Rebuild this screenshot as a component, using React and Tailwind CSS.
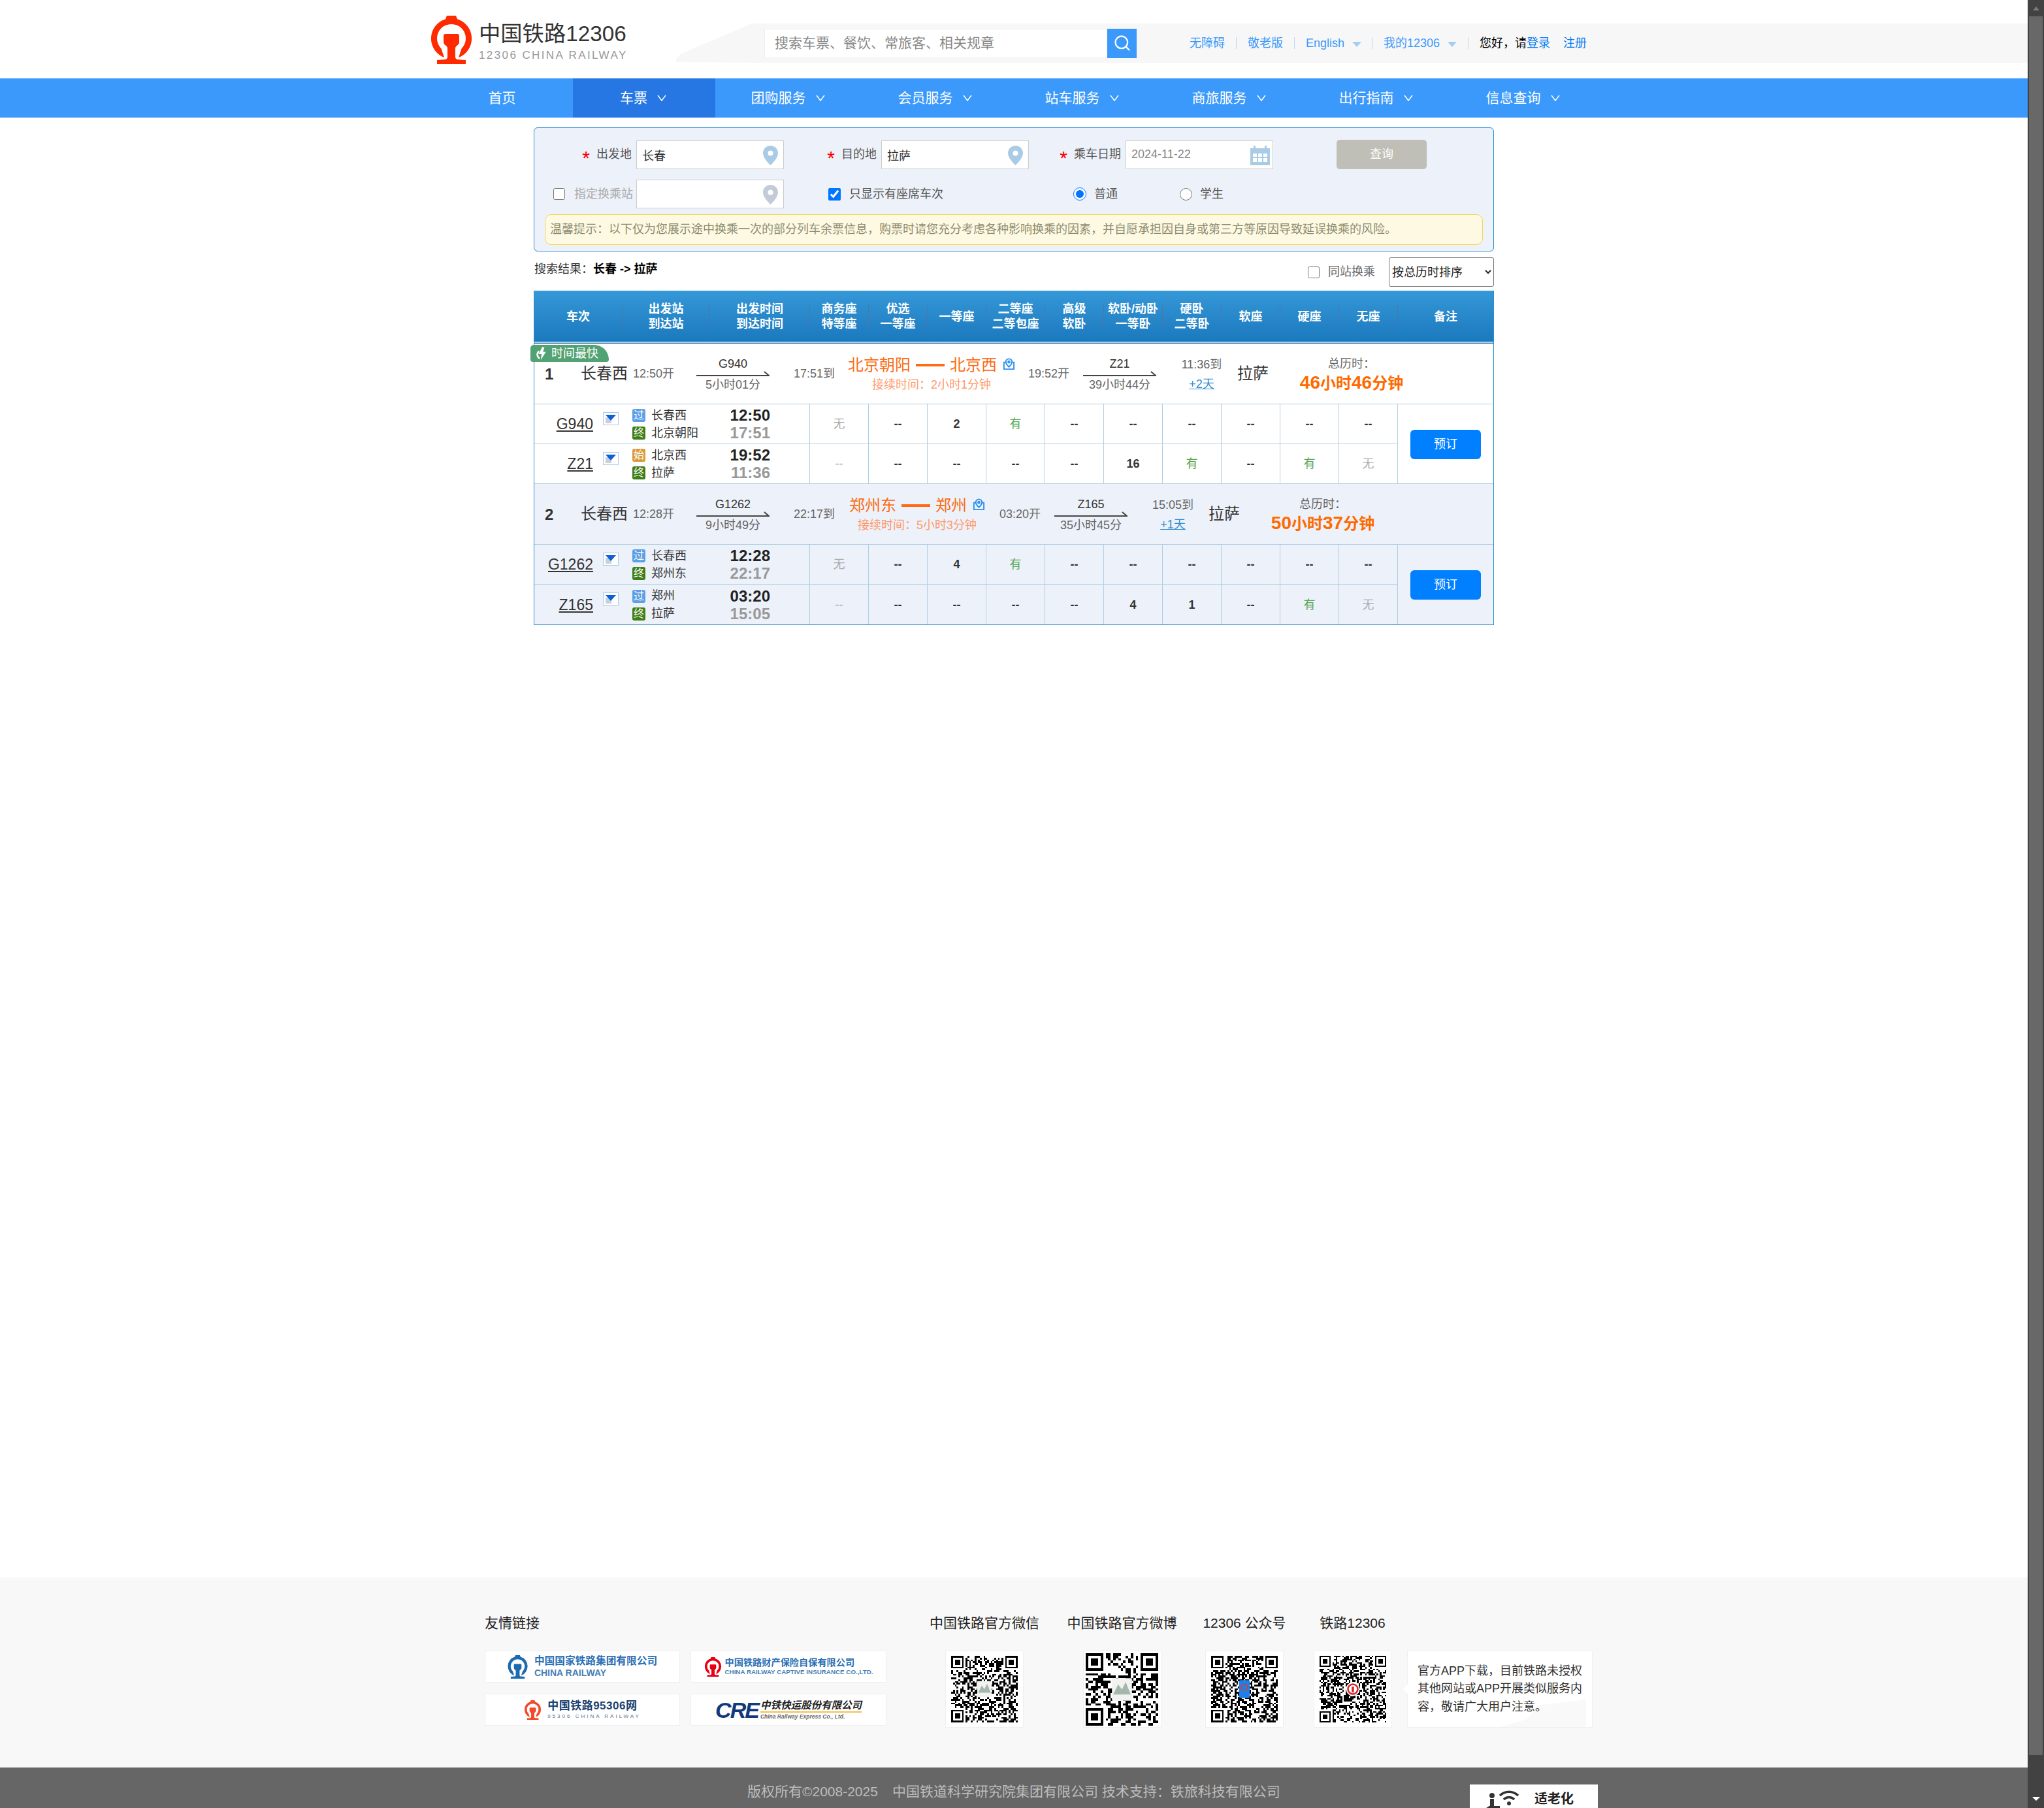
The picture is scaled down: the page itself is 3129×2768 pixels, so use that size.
import { Search } from 'lucide-react'

const NAV = [
  ['首页', 217, false],
  ['车票', 218, true],
  ['团购服务', 225, true],
  ['会员服务', 225, true],
  ['站车服务', 225, true],
  ['商旅服务', 225, true],
  ['出行指南', 225, true],
  ['信息查询', 225, true],
]

const HEADERS = [
  ['车次'], ['出发站', '到达站'], ['出发时间', '到达时间'], ['商务座', '特等座'], ['优选', '一等座'], ['一等座'],
  ['二等座', '二等包座'], ['高级', '软卧'], ['软卧/动卧', '一等卧'], ['硬卧', '二等卧'], ['软座'], ['硬座'], ['无座'], ['备注'],
]

const TAG_COLORS = {
  过: 'bg-[#5d9fe6]',
  终: 'bg-[#3f7d17]',
  始: 'bg-[#d99b3c]',
}

const ROUTES = [
  {
    no: 1,
    shade: false,
    pad: 'px-[20px]',
    from: '长春西', dep: '12:50开',
    first: { train: 'G940', dur: '5小时01分', arr: '17:51到' },
    stationA: '北京朝阳', stationB: '北京西', wait: '接续时间：2小时1分钟',
    second: { dep: '19:52开', train: 'Z21', dur: '39小时44分', arr: '11:36到', plus: '+2天' },
    to: '拉萨', total: ['46', '46'],
    rows: [
      {
        train: 'G940', fromTag: '过', toTag: '终', a: '长春西', b: '北京朝阳', t1: '12:50', t2: '17:51',
        seats: ['无', '--', '2', '有', '--', '--', '--', '--', '--', '--'],
      },
      {
        train: 'Z21', fromTag: '始', toTag: '终', a: '北京西', b: '拉萨', t1: '19:52', t2: '11:36',
        seats: ['-', '--', '--', '--', '--', '16', '有', '--', '有', '无'],
      },
    ],
  },
  {
    no: 2,
    shade: true,
    pad: 'px-[22px]',
    from: '长春西', dep: '12:28开',
    first: { train: 'G1262', dur: '9小时49分', arr: '22:17到' },
    stationA: '郑州东', stationB: '郑州', wait: '接续时间：5小时3分钟',
    second: { dep: '03:20开', train: 'Z165', dur: '35小时45分', arr: '15:05到', plus: '+1天' },
    to: '拉萨', total: ['50', '37'],
    rows: [
      {
        train: 'G1262', fromTag: '过', toTag: '终', a: '长春西', b: '郑州东', t1: '12:28', t2: '22:17',
        seats: ['无', '--', '4', '有', '--', '--', '--', '--', '--', '--'],
      },
      {
        train: 'Z165', fromTag: '过', toTag: '终', a: '郑州', b: '拉萨', t1: '03:20', t2: '15:05',
        seats: ['-', '--', '--', '--', '--', '4', '1', '--', '有', '无'],
      },
    ],
  },
]

function RailLogo({ color, className }) {
  return (
    <svg viewBox="0 0 62 74" className={className}>
      <path
        fill={color}
        fillRule="evenodd"
        d="M24 0h14l2 5.300A31 31 0 0 1 42 64L46.500 50.500A22 22 0 1 0 15.500 50.500L20 64A31 31 0 0 1 22 5.300Z"
      />
      <path
        fill={color}
        d="M22 28h18a3 3 0 0 1 3 3v9q0 4-4 6l-2 3v14q0 3 3 4l13 1v6H9v-6l13-1q3-1 3-4V49l-2-3q-4-2-4-6v-9a3 3 0 0 1 3-3Z"
      />
    </svg>
  )
}

function Pin({ color }) {
  return (
    <svg viewBox="0 0 23 30" className="absolute right-[8px] top-[7px] h-[30px] w-[23px]">
      <path
        fill={color}
        fillRule="evenodd"
        d="M11.500 0C5 0 0 5 0 11.500 0 18 7 26 11.500 30 16 26 23 18 23 11.500 23 5 18 0 11.500 0ZM11.500 7.500a4 4 0 1 1 0 8 4 4 0 0 1 0-8Z"
      />
    </svg>
  )
}

function CalendarIcon() {
  return (
    <svg viewBox="0 0 30 30" className="absolute right-[4px] top-[7px] h-[30px] w-[30px]">
      <path fill="#a9cbe6" d="M0 4h5V0h3v4h14V0h3v4h5v26H0Z" />
      <path
        fill="#fff"
        d="M4 12h6v5H4ZM12 12h6v5h-6ZM20 12h6v5h-6ZM4 19h6v6H4ZM12 19h6v6h-6ZM20 19h6v6h-6Z"
      />
    </svg>
  )
}

function RouteIcon() {
  return (
    <svg viewBox="0 0 20 20" className="ml-[9px] mt-[-4px] h-[20px] w-[19px]" fill="none" stroke="#2a90f0" strokeWidth="2">
      <path d="M6 7.500H2v11h16v-11h-4" />
      <path d="M10 15c-3-3-5-5-5-8a5 5 0 0 1 10 0c0 3-2 5-5 8Z" />
      <circle cx="10" cy="7" r="1.500" />
    </svg>
  )
}

function HalfArrow() {
  return (
    <svg viewBox="0 0 112 8" className="h-[8px] w-[112px]" fill="none" stroke="#444" strokeWidth="2">
      <path d="M0 7h111L104 1" />
    </svg>
  )
}

function Chevron() {
  return (
    <svg viewBox="0 0 14 12" className="ml-[15px] h-[12px] w-[14px]" fill="none" stroke="#fff" strokeWidth="1.500">
      <path d="M1 2l6 8 6-8" />
    </svg>
  )
}

function Caret() {
  return <span className="ml-[12px] mt-[3px] h-0 w-0 border-x-[7px] border-t-[8px] border-x-transparent border-t-[#a8cdf5]" />
}

function FoldIcon() {
  return (
    <svg viewBox="0 0 24 20" className="ml-[15px] mt-[-18px] h-[20px] w-[24px] shrink-0">
      <rect x="0.500" y="0.500" width="23" height="19" fill="#fff" stroke="#a9cbe6" />
      <rect x="4" y="8" width="9" height="9" fill="#c8d0da" />
      <path d="M4 4h16l-8 9Z" fill="#0b5fd8" />
    </svg>
  )
}

function qrPath(seed, n) {
  let s = seed
  let d = ''
  const finder = (x, y) => x >= -1 && y >= -1 && x <= 7 && y <= 7
  for (let y = 0; y < n; y++) {
    for (let x = 0; x < n; x++) {
      s = (s * 1103515245 + 12345) & 0x7fffffff
      if (finder(x, y) || finder(x - n + 7, y) || finder(x, y - n + 7)) continue
      if ((s >> 16) % 100 < 50) d += `M${x} ${y}h1v1h-1Z`
    }
  }
  return d
}

function Finder({ x, y }) {
  return (
    <g>
      <path fillRule="evenodd" d={`M${x} ${y}h7v7h-7ZM${x + 1} ${y + 1}v5h5v-5Z`} />
      <rect x={x + 2} y={y + 2} width="3" height="3" />
    </g>
  )
}

function QrCode({ seed, n = 37, size, center }) {
  return (
    <svg viewBox={`0 0 ${n} ${n}`} style={{ width: size, height: size }} shapeRendering="crispEdges">
      <path d={qrPath(seed, n)} />
      <Finder x={0} y={0} />
      <Finder x={n - 7} y={0} />
      <Finder x={0} y={n - 7} />
      {center === 'photo' && (
        <g shapeRendering="auto">
          <rect x={n / 2 - 4} y={n / 2 - 4.500} width="8" height="9" fill="#f2f3f0" />
          <path d={`M${n / 2 - 3.500} ${n / 2 + 2}l2-4 1.500 2 1.500-3 2 5Z`} fill="#a5b6ac" />
        </g>
      )}
      {center === 'blue' && (
        <g shapeRendering="auto">
          <rect x={n / 2 - 3} y={n / 2 - 5} width="6" height="10" rx="1" fill="#1e80e8" />
          <circle cx={n / 2} cy={n / 2 - 1} r="1.800" fill="none" stroke="#e03a2a" strokeWidth="0.600" />
        </g>
      )}
      {center === 'red' && (
        <g shapeRendering="auto">
          <circle cx={n / 2} cy={n / 2} r="4.200" fill="#fff" />
          <circle cx={n / 2} cy={n / 2} r="3" fill="none" stroke="#d9262a" strokeWidth="1" />
          <rect x={n / 2 - 0.700} y={n / 2 - 1.500} width="1.400" height="3.500" fill="#d9262a" />
        </g>
      )}
    </svg>
  )
}

function Field({ label, labelWidth, children }) {
  return (
    <div className="flex items-center">
      <div className={`flex items-center justify-end pr-[7px] text-[#555] ${labelWidth}`}>
        {label}
      </div>
      {children}
    </div>
  )
}

function Star() {
  return <span className="mr-[10px] mt-[10px] text-[30px] leading-none text-[#f00]">*</span>
}

function TextBox({ value, width = 'w-[226px]', color = 'text-[#333]', children }) {
  return (
    <div className={`relative h-[44px] border border-[#ccc] bg-white ${width}`}>
      <input
        readOnly
        defaultValue={value}
        className={`h-full w-full bg-transparent pl-[8px] text-[18px] outline-none ${color}`}
      />
      {children}
    </div>
  )
}

function QueryForm() {
  return (
    <div className="h-[190px] rounded-[6px] border border-[#2e8ccf] bg-[#edf1f9] pt-[18px] text-[18px]">
      <div className="flex items-center">
        <Field labelWidth="w-[156px]" label={<><Star />出发地</>}>
          <TextBox value="长春"><Pin color="#a9cbe6" /></TextBox>
        </Field>
        <Field labelWidth="w-[149px]" label={<><Star />目的地</>}>
          <TextBox value="拉萨"><Pin color="#a9cbe6" /></TextBox>
        </Field>
        <Field labelWidth="w-[148px]" label={<><Star />乘车日期</>}>
          <TextBox value="2024-11-22" color="text-[#888]"><CalendarIcon /></TextBox>
        </Field>
        <button className="ml-[97px] h-[45px] w-[138px] rounded-[5px] bg-[#bfbfb7] text-[18px] text-white">查询</button>
      </div>
      <div className="mt-[16px] flex items-center">
        <div className="flex w-[156px] items-center pl-[29px] text-[#aaa]">
          <input type="checkbox" className="mr-[14px] h-[18px] w-[18px]" />
          <span>指定换乘站</span>
        </div>
        <TextBox value=""><Pin color="#c3cad8" /></TextBox>
        <label className="ml-[68px] flex w-[375px] items-center text-[#555]">
          <input type="checkbox" defaultChecked className="mr-[13px] h-[19px] w-[19px]" />
          只显示有座席车次
        </label>
        <label className="flex w-[163px] items-center text-[#555]">
          <input type="radio" name="kind" defaultChecked className="mr-[12px] h-[20px] w-[20px]" />
          普通
        </label>
        <label className="flex items-center text-[#555]">
          <input type="radio" name="kind" className="mr-[12px] h-[19px] w-[19px]" />
          学生
        </label>
      </div>
      <div className="mx-[16px] mt-[9px] flex h-[47px] items-center rounded-[10px] border border-[#f3d54e] bg-[#fef9e3] pl-[7px] text-[#8c8c70]">
        温馨提示：以下仅为您展示途中换乘一次的部分列车余票信息，购票时请您充分考虑各种影响换乘的因素，并自愿承担因自身或第三方等原因导致延误换乘的风险。
      </div>
    </div>
  )
}

function ResultBar() {
  return (
    <div className="flex h-[60px] items-center pl-[1px] text-[18px]">
      <span className="mb-[6px] text-[#333]">搜索结果：</span>
      <span className="mb-[6px] font-bold text-black">长春 -&gt; 拉萨</span>
      <label className="ml-auto mt-[3px] flex items-center text-[#666]">
        <input type="checkbox" className="mr-[13px] h-[18px] w-[18px]" />
        同站换乘
      </label>
      <select className="ml-[21px] mt-[3px] h-[45px] w-[161px] rounded-[3px] border border-[#767676] bg-white text-[18px] text-[#222]">
        <option>按总历时排序</option>
      </select>
    </div>
  )
}

function TableHead() {
  return (
    <div className="h-[81px] border-b border-[#1a5f96] bg-gradient-to-b from-[#3598d7] to-[#1a78bd]">
      <div className="grid h-[78px] grid-cols-[135px_134px_153px_repeat(10,90px)_1fr] items-center pt-[2px]">
        {HEADERS.map((lines, i) => (
          <div
            key={i}
            className={`flex h-[38px] flex-col items-center justify-center text-[18px] font-bold leading-[23px] text-white ${
              i < HEADERS.length - 1 ? 'border-r border-[#4a78ae]' : ''
            }`}
          >
            {lines.map(l => <span key={l} className="whitespace-nowrap">{l}</span>)}
          </div>
        ))}
      </div>
      <div className="h-[2px] bg-[#a8cfe8]" />
    </div>
  )
}

function Leg({ train, dur }) {
  return (
    <div className="flex w-[112px] flex-col items-center pt-[2px]">
      <span className="text-[18px] leading-[22px] text-[#333]">{train}</span>
      <HalfArrow />
      <span className="mt-[2px] whitespace-nowrap text-[18px] leading-[22px] text-[#666]">{dur}</span>
    </div>
  )
}

function Summary({ route }) {
  return (
    <div className={`relative flex h-[93px] items-center whitespace-nowrap border-b border-[#b0cfe4] pl-[16px] text-[18px] ${route.shade ? 'bg-[#edf1f9]' : 'bg-white'}`}>
      {route.no === 1 && (
        <div className="absolute left-[-6px] top-[2px] flex h-[26px] w-[120px] items-center rounded-tr-[26px] rounded-tl-[6px] rounded-br-[4px] rounded-bl-[4px] bg-[#52a274] pl-[9px] text-[18px] text-white">
          <svg viewBox="0 0 14 18" className="mr-[7px] h-[20px] w-[16px]" fill="#fff">
            <path d="M8 0 3 10h4l-1 8 7-11H9l2-6Z" />
            <path d="M3 5a7 7 0 0 0 1 12l1-2a5 5 0 0 1-1-8Z" />
          </svg>
          时间最快
        </div>
      )}
      <span className="w-[55px] pt-[1px] text-[24px] font-bold text-[#333]">{route.no}</span>
      <span className="w-[72px] text-[24px] text-[#333]">{route.from}</span>
      <span className="ml-[8px] w-[97px] text-[#666]">{route.dep}</span>
      <Leg train={route.first.train} dur={route.first.dur} />
      <span className="ml-[37px] w-[63px] text-[#666]">{route.first.arr}</span>
      <div className={`flex flex-col items-center ${route.pad}`}>
        <div className="flex items-center text-[24px] leading-[30px] text-[#fc6c15]">
          <span>{route.stationA}</span>
          <span className="mx-[8px] h-[4px] w-[44px] bg-[#fc6c15]" />
          <span>{route.stationB}</span>
          <RouteIcon />
        </div>
        <span className="mt-[4px] leading-[22px] text-[#ff9a6c]">{route.wait}</span>
      </div>
      <span className="w-[63px] text-[#666]">{route.second.dep}</span>
      <div className="ml-[21px]"><Leg train={route.second.train} dur={route.second.dur} /></div>
      <div className="ml-[38px] flex w-[63px] flex-col items-center pt-[2px]">
        <span className="leading-[22px] text-[#666]">{route.second.arr}</span>
        <a className="mt-[8px] leading-[22px] text-[#2e8ccf] underline">{route.second.plus}</a>
      </div>
      <span className="ml-[23px] w-[48px] text-[24px] text-[#333]">{route.to}</span>
      <div className="ml-[48px] flex w-[158px] flex-col items-center pt-[6px]">
        <span className="leading-[22px] text-[#666]">总历时：</span>
        <span className="flex items-baseline text-[24px] font-bold leading-[36px] text-[#ff6a00]">
          <span className="text-[28px]">{route.total[0]}</span>小时<span className="text-[28px]">{route.total[1]}</span>分钟
        </span>
      </div>
    </div>
  )
}

function Seat({ value }) {
  let style = 'font-bold text-[#333]'
  let text = value
  if (value === '无') style = 'text-[#aaa]'
  if (value === '有') style = 'text-[#5aa652]'
  if (value === '-') {
    style = 'text-[#aaa]'
    text = '--'
  }
  return <div className={`flex items-center justify-center border-r border-[#b0cfe4] pt-[1px] ${style}`}>{text}</div>
}

function StationLine({ tag, name, time, muted }) {
  return (
    <div className="flex h-[27px] w-[211px] items-center">
      <span className={`flex h-[20px] w-[20px] items-center justify-center rounded-[3px] text-[16px] leading-none text-white ${TAG_COLORS[tag]}`}>
        {tag}
      </span>
      <span className="ml-[9px] text-[18px] text-[#333]">{name}</span>
      <span className={`ml-auto text-[24px] font-bold ${muted ? 'text-[#999]' : 'text-[#222]'}`}>{time}</span>
    </div>
  )
}

function TrainRow({ row, height }) {
  return (
    <div className={`grid grid-cols-[422px_repeat(10,90px)] text-[18px] ${height}`}>
      <div className="flex items-center border-r border-[#b0cfe4] pt-[1px]">
        <a className="w-[90px] text-right text-[23px] text-[#333] underline">{row.train}</a>
        <FoldIcon />
        <div className="ml-[21px] flex flex-col">
          <StationLine tag={row.fromTag} name={row.a} time={row.t1} />
          <StationLine tag={row.toTag} name={row.b} time={row.t2} muted />
        </div>
      </div>
      {row.seats.map((s, i) => <Seat key={i} value={s} />)}
    </div>
  )
}

function Route({ route }) {
  return (
    <div className={route.shade ? 'bg-[#edf1f9]' : 'bg-white'}>
      <Summary route={route} />
      <div className={`flex ${route.shade ? '' : 'border-b border-[#b0cfe4]'}`}>
        <div>
          <TrainRow row={route.rows[0]} height="h-[61px] border-b border-[#b0cfe4]" />
          <TrainRow row={route.rows[1]} height={route.shade ? 'h-[61px]' : 'h-[60px]'} />
        </div>
        <div className="flex flex-1 items-center justify-center pt-[1px]">
          <button className="h-[45px] w-[108px] rounded-[6px] bg-[#0080ff] text-[18px] text-white">预订</button>
        </div>
      </div>
    </div>
  )
}

function LogoCard({ children }) {
  return <div className="flex h-[49px] items-center justify-center border border-[#efefef] bg-white">{children}</div>
}

function FriendLinks() {
  return (
    <div className="ml-[742px] w-[615px]">
      <div className="h-[30px] text-[21px] leading-[30px] text-[#222]">友情链接</div>
      <div className="mt-[27px] grid grid-cols-[299px_300px] gap-x-[16px] gap-y-[17px]">
        <LogoCard>
          <RailLogo color="#1c6bb0" className="h-[36px] w-[31px]" />
          <div className="ml-[10px] flex flex-col">
            <span className="text-[15.700px] font-bold leading-[20px] text-[#2a6fb4]">中国国家铁路集团有限公司</span>
            <span className="text-[14px] font-bold leading-[17px] text-[#4a7fb5]">CHINA RAILWAY</span>
          </div>
        </LogoCard>
        <LogoCard>
          <RailLogo color="#e60012" className="h-[30px] w-[27px]" />
          <div className="ml-[5px] flex flex-col">
            <span className="text-[14.200px] font-bold leading-[17px] text-[#2a6fb4]">中国铁路财产保险自保有限公司</span>
            <span className="text-[9.800px] font-bold leading-[12px] text-[#4a7fb5]">CHINA RAILWAY CAPTIVE INSURANCE CO.,LTD.</span>
          </div>
        </LogoCard>
        <LogoCard>
          <RailLogo color="#f24a2a" className="h-[30px] w-[27px]" />
          <div className="ml-[9px] flex flex-col">
            <span className="text-[17px] font-bold leading-[21px] tracking-[0.500px] text-[#1b3f6e]">中国铁路95306网</span>
            <span className="text-[8px] leading-[12px] tracking-[3px] text-[#5a7290]">95306 CHINA RAILWAY</span>
          </div>
        </LogoCard>
        <LogoCard>
          <span className="text-[34px] font-bold italic leading-none tracking-[-2px] text-[#123a7a]">CRE</span>
          <div className="ml-[3px] flex flex-col">
            <span className="border-b-2 border-[#f2c14e] text-[15.500px] font-bold italic leading-[19px] text-[#222]">中铁快运股份有限公司</span>
            <span className="text-[8.500px] font-bold italic leading-[12px] text-[#666]">China Railway Express Co., Ltd.</span>
          </div>
        </LogoCard>
      </div>
    </div>
  )
}

function QrColumn({ title, width, marginLeft, children }) {
  return (
    <div className={`flex flex-col items-center ${width} ${marginLeft}`}>
      <div className="h-[30px] whitespace-nowrap text-[21px] leading-[30px] text-[#222]">{title}</div>
      <div className="mt-[27px] flex h-[118px] w-[120px] items-center justify-center border border-[#efefef] bg-white">
        {children}
      </div>
    </div>
  )
}

function Footer() {
  return (
    <div className="mt-auto">
      <div className="flex h-[291px] bg-[#f8f8f8] pt-[55px]">
        <FriendLinks />
        <QrColumn title="中国铁路官方微信" width="w-[168px]" marginLeft="ml-[66px]">
          <QrCode seed={11} size={102} center="photo" />
        </QrColumn>
        <QrColumn title="中国铁路官方微博" width="w-[167px]" marginLeft="ml-[43px]">
          <QrCode seed={23} n={29} size={111} center="photo" />
        </QrColumn>
        <QrColumn title="12306 公众号" width="w-[126px]" marginLeft="ml-[41px]">
          <QrCode seed={37} size={102} center="blue" />
        </QrColumn>
        <QrColumn title="铁路12306" width="w-[119px]" marginLeft="ml-[43px]">
          <QrCode seed={59} n={41} size={102} center="red" />
        </QrColumn>
        <div className="relative ml-[24px] mt-[57px] flex h-[118px] w-[284px] items-center overflow-visible border border-[#efefef] bg-white pl-[15px] text-[18px] leading-[27.500px] text-[#333]">
          <span className="absolute left-[-5px] top-[52px] h-[12px] w-[12px] rotate-45 bg-white" />
          <svg viewBox="0 0 220 70" className="absolute bottom-0 right-0 h-[42px] w-[150px]" fill="#f9f9f9">
            <path d="M0 70 70 50 100 14 220 0V70Z" />
          </svg>
          <p className="relative w-[262px]">官方APP下载，目前铁路未授权其他网站或APP开展类似服务内容，敬请广大用户注意。</p>
        </div>
      </div>
      <div className="flex h-[62px] overflow-hidden bg-[#666] pl-[1144px]">
        <div className="flex h-full w-[815px] items-center whitespace-nowrap pt-[12px] text-[21px] text-[#bdbdbd]">
          <span>版权所有©2008-2025</span>
          <span className="ml-[22px]">中国铁道科学研究院集团有限公司 技术支持：铁旅科技有限公司</span>
        </div>
        <div className="ml-[291px] mt-[26px] flex h-[60px] w-[196px] items-start bg-white pl-[24px] pt-[9px]">
          <svg viewBox="0 0 52 30" className="h-[30px] w-[52px]" fill="none" stroke="#333" strokeWidth="3.500">
            <path d="M22 8a20 20 0 0 1 28 0M28 14a11 11 0 0 1 16 0" />
            <circle cx="36" cy="20" r="3" fill="#333" stroke="none" />
            <circle cx="10" cy="8" r="4" fill="#333" stroke="none" />
            <path d="M10 13v14h12M2 30l6-4" strokeWidth="6" />
          </svg>
          <span className="ml-[23px] text-[20px] font-bold leading-[26px] text-[#222]">适老化</span>
        </div>
      </div>
    </div>
  )
}

function Scrollbar() {
  return (
    <div className="flex h-full w-[25px] shrink-0 flex-col items-center bg-[#424242]">
      <div className="flex h-[25px] items-center justify-center">
        <span className="h-0 w-0 border-x-[5px] border-b-[6px] border-x-transparent border-b-[#7a7a7a]" />
      </div>
      <div className="h-[2662px] w-[21px] bg-[#686868]" />
      <div className="flex flex-1 items-end justify-center pb-[11px]">
        <span className="h-0 w-0 border-x-[6px] border-t-[6px] border-x-transparent border-t-white" />
      </div>
    </div>
  )
}

export default function App() {
  return (
    <div className="flex h-[2768px] w-[3129px] overflow-hidden bg-white font-['Liberation_Sans','Noto_Sans_CJK_SC',sans-serif]">
      <div className="flex min-w-0 flex-1 flex-col">
        <div className="flex h-[120px]">
          <div className="ml-[660px] flex w-[375px] pt-[24px]">
            <RailLogo color="#ff2a00" className="h-[74px] w-[62px]" />
            <div className="ml-[11px] mt-[6px] flex flex-col">
              <span className="text-[33.300px] leading-[44px] text-[#333]">中国铁路12306</span>
              <span className="text-[17px] leading-[22px] tracking-[2.400px] text-[#999]">12306 CHINA RAILWAY</span>
            </div>
          </div>
          <div className="mt-[36px] flex h-[60px] flex-1">
            <svg viewBox="0 0 127 60" preserveAspectRatio="none" className="h-[60px] w-[127px]" fill="#f7f7f7">
              <path d="M127 0H118Q110 1 100 7L8 46Q0 51 0 57V59L127 60Z" />
            </svg>
            <div className="flex flex-1 items-center bg-[#f7f7f7] pl-[8px]">
              <div className="flex h-[45px] w-[525px] items-center border border-[#eee] bg-white pl-[15px] text-[21px] text-[#888]">
                搜索车票、餐饮、常旅客、相关规章
              </div>
              <button className="flex h-[45px] w-[45px] items-center justify-center bg-[#3b99fc]">
                <Search className="h-[28px] w-[28px] text-white" strokeWidth={2} />
              </button>
              <div className="ml-[81px] flex items-center whitespace-nowrap text-[18px] text-[#3b99fc]">
                <span>无障碍</span>
                <span className="mx-[17px] h-[18px] w-px bg-[#bcd8f5]" />
                <span>敬老版</span>
                <span className="mx-[17px] h-[18px] w-px bg-[#bcd8f5]" />
                <span>English</span>
                <Caret />
                <span className="ml-[16px] mr-[17px] h-[18px] w-px bg-[#bcd8f5]" />
                <span>我的12306</span>
                <Caret />
                <span className="ml-[17px] mr-[17px] h-[18px] w-px bg-[#bcd8f5]" />
                <span className="text-black">您好，请</span>
                <span className="text-[#0a7cf5]">登录</span>
                <span className="ml-[20px] text-[#0a7cf5]">注册</span>
              </div>
            </div>
          </div>
        </div>

        <div className="flex h-[60px] bg-[#3b99fc] pl-[660px]">
          {NAV.map(([name, width, chevron], i) => (
            <div
              key={name}
              style={{ width }}
              className={`flex items-center justify-center text-[21px] text-white ${chevron ? 'pr-[3px]' : ''} ${i === 1 ? 'bg-[#2676e3]' : ''}`}
            >
              {name}
              {chevron && <Chevron />}
            </div>
          ))}
        </div>

        <div className="ml-[817px] mt-[15px] w-[1470px]">
          <QueryForm />
          <ResultBar />
          <div className="border-x border-b border-[#2e8ccf]">
            <TableHead />
            {ROUTES.map(r => <Route key={r.no} route={r} />)}
          </div>
        </div>

        <Footer />
      </div>
      <Scrollbar />
    </div>
  )
}
